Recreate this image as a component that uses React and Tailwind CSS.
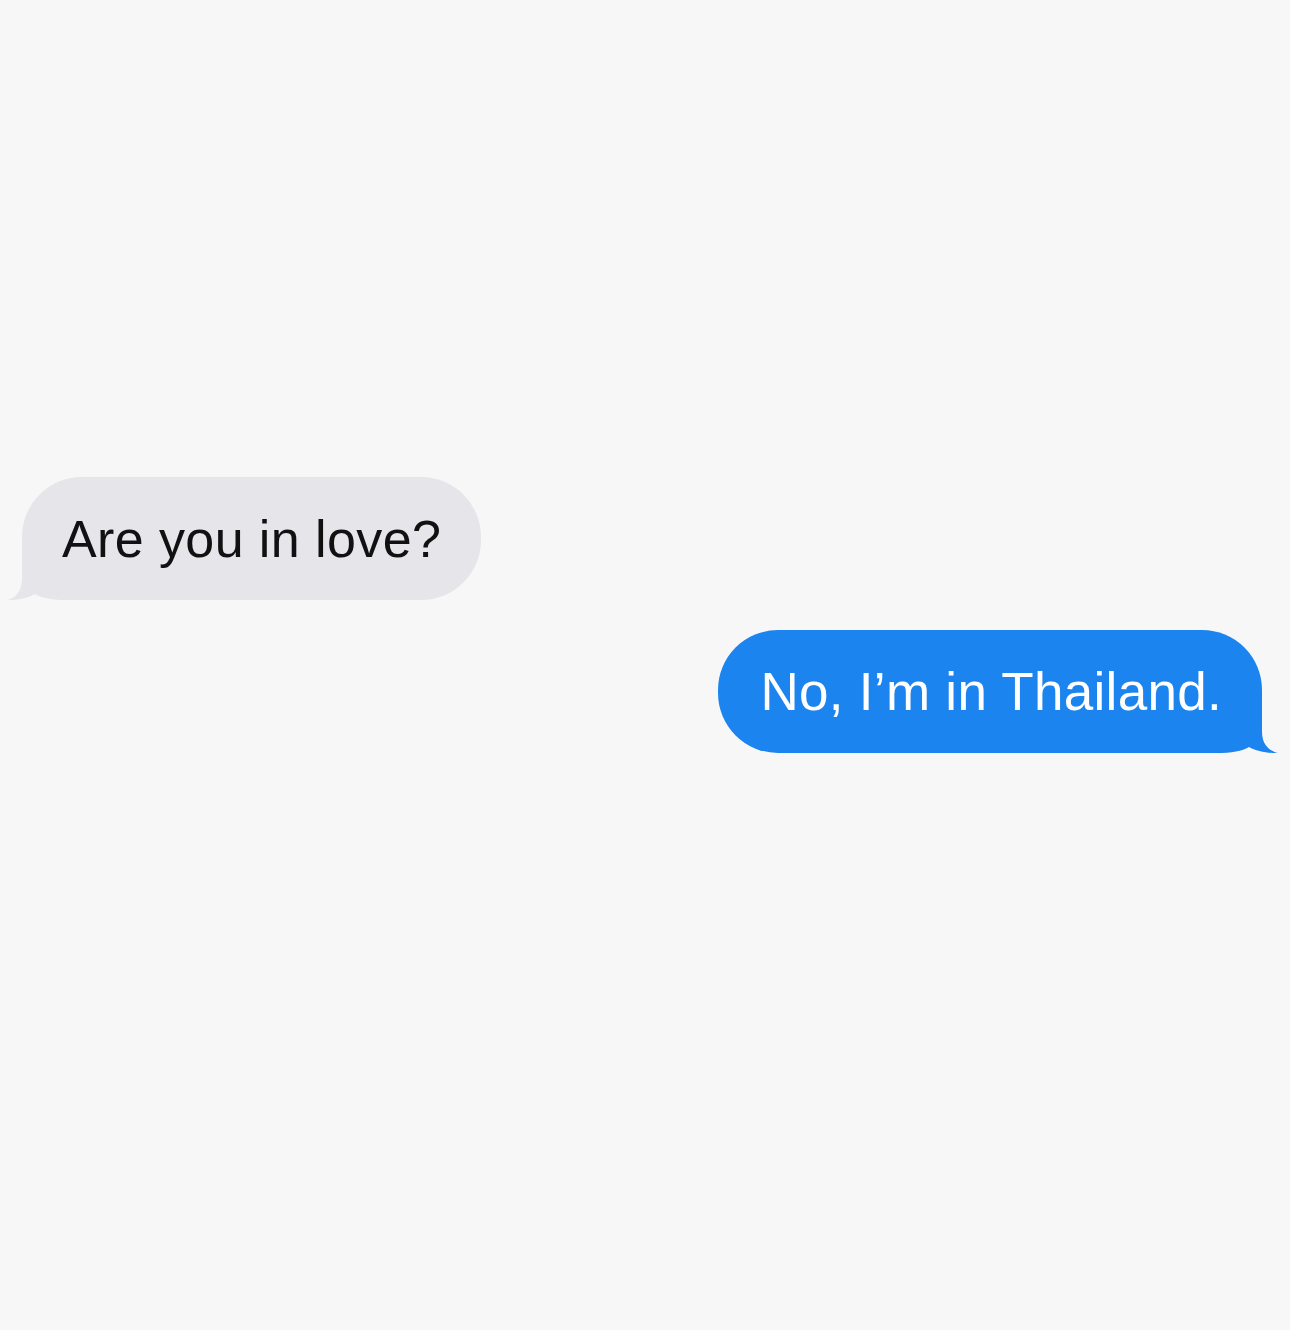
import React from "react";

const Tail = ({ side, color, reach }) => {
  // curled tail hugging the bottom corner of a bubble; e = bubble edge inside the box
  const e = reach;
  const d = `M${e} 0 L${e} 38 C${e} 50 ${e - 5} 57 0 60 C10 60.5 ${e + 6} 58 ${e + 13} 54 C${e + 20} 58 ${e + 30} 60 ${e + 46} 60 L90 60 L90 0 Z`;
  return (
    <svg
      width="90"
      height="60"
      viewBox="0 0 90 60"
      className={
        side === "left"
          ? "absolute bottom-0 left-[-14px]"
          : "absolute bottom-0 right-[-16px] -scale-x-100"
      }
    >
      <path d={d} fill={color} />
    </svg>
  );
};

const Bubble = ({ side, children }) => {
  const left = side === "left";
  return (
    <div
      className={
        left
          ? "relative inline-flex h-[123px] items-center rounded-[60px] bg-[#e5e5ea] px-10 text-[#111111]"
          : "relative inline-flex h-[123px] items-center rounded-[60px] bg-[#1b84ef] pl-[42px] pr-10 text-white"
      }
    >
      <Tail side={side} color={left ? "#e5e5ea" : "#1b84ef"} reach={left ? 14 : 16} />
      <span
        className={
          left
            ? "relative z-10 text-[52px] leading-none tracking-[0.4px]"
            : "relative z-10 text-[53px] leading-none tracking-[0.3px]"
        }
      >
        {children}
      </span>
    </div>
  );
};

export default function App() {
  return (
    <div className="min-h-[1330px] w-full bg-[#f7f7f7] font-['Liberation_Sans',Arial,sans-serif]">
      <div className="flex flex-col pt-[477px]">
        <div className="flex pl-[22px]">
          <Bubble side="left">Are you in love?</Bubble>
        </div>
        <div className="mt-[30px] flex justify-end pr-[28px]">
          <Bubble side="right">No, I’m in Thailand.</Bubble>
        </div>
      </div>
    </div>
  );
}
